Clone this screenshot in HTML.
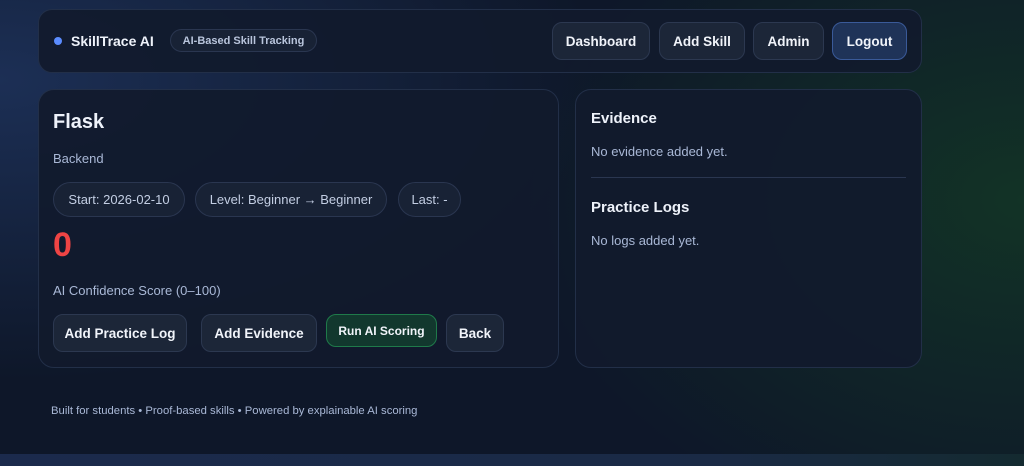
<!DOCTYPE html>
<html><head><meta charset="utf-8"><style>
*{box-sizing:border-box;margin:0;padding:0}
body{width:1024px;height:466px;overflow:hidden;font-family:"Liberation Sans",sans-serif;position:relative;
background:radial-gradient(ellipse 500px 350px at 1024px 200px,#123326 0%,rgba(18,51,38,0) 100%),radial-gradient(ellipse 600px 300px at 0 80px,#1c2f55 0%,rgba(28,47,85,0) 100%),#0e1729;color:#eef2fa}
.a{position:absolute}
.card{position:absolute;background:rgba(17,26,45,0.92);border:1px solid #222f48;border-radius:16px}
.btn{position:absolute;background:#1c2638;border:1px solid #2c3850;border-radius:10px;font-weight:bold;font-size:13.5px;color:#f1f4fa;display:flex;align-items:center;justify-content:center;white-space:nowrap}
.pill{position:absolute;background:#182235;border:1px solid #2a3650;border-radius:18px;font-size:13px;color:#c3cee3;display:flex;align-items:center;justify-content:center;white-space:nowrap}
.mut{color:#a9b8d6;font-size:13px}
</style></head><body>
<div class="card" style="left:38px;top:9px;width:884px;height:64px;border-radius:14px"></div>
<div class="a" style="left:54px;top:37px;width:8px;height:8px;border-radius:50%;background:#5b8cff"></div>
<div class="a" style="left:71px;top:33px;font-size:14px;font-weight:bold">SkillTrace AI</div>
<div class="pill" style="left:170px;top:29px;width:147px;height:23px;font-size:11px;font-weight:bold;color:#b9c5dc">AI-Based Skill Tracking</div>
<div class="btn" style="left:552px;top:22px;width:98px;height:38px">Dashboard</div>
<div class="btn" style="left:659px;top:22px;width:86px;height:38px">Add Skill</div>
<div class="btn" style="left:753px;top:22px;width:71px;height:38px">Admin</div>
<div class="btn" style="left:832px;top:22px;width:75px;height:38px;background:#1f3358;border-color:#3a5a99">Logout</div>

<div class="card" style="left:38px;top:89px;width:521px;height:279px"></div>
<div class="a" style="left:53px;top:111px;font-size:20px;font-weight:bold">Flask</div>
<div class="a mut" style="left:53px;top:151px">Backend</div>
<div class="pill" style="left:53px;top:182px;width:132px;height:35px">Start: 2026-02-10</div>
<div class="pill" style="left:195px;top:182px;width:192px;height:35px">Level: Beginner → Beginner</div>
<div class="pill" style="left:398px;top:182px;width:63px;height:35px">Last: -</div>
<div class="a" style="left:53px;top:226px;font-size:34px;font-weight:bold;color:#ef4444">0</div>
<div class="a mut" style="left:53px;top:283px">AI Confidence Score (0–100)</div>
<div class="btn" style="left:53px;top:314px;width:134px;height:38px">Add Practice Log</div>
<div class="btn" style="left:201px;top:314px;width:116px;height:38px">Add Evidence</div>
<div class="btn" style="left:326px;top:314px;width:111px;height:33px;background:#12382e;border-color:#1f7a4a;font-size:12px">Run AI Scoring</div>
<div class="btn" style="left:446px;top:314px;width:58px;height:38px">Back</div>

<div class="card" style="left:575px;top:89px;width:347px;height:279px"></div>
<div class="a" style="left:591px;top:110px;font-size:15px;font-weight:bold">Evidence</div>
<div class="a mut" style="left:591px;top:144px">No evidence added yet.</div>
<div class="a" style="left:591px;top:177px;width:315px;height:1px;background:#2a3650"></div>
<div class="a" style="left:591px;top:199px;font-size:15px;font-weight:bold">Practice Logs</div>
<div class="a mut" style="left:591px;top:233px">No logs added yet.</div>

<div class="a" style="left:51px;top:405px;font-size:11.3px;color:#a9b8d6">Built for students • Proof-based skills • Powered by explainable AI scoring</div>
<div class="a" style="left:0;top:454px;width:1024px;height:12px;background:linear-gradient(90deg,#1b2a4c,#1a2a45 70%,#142a30)"></div>
</body></html>
